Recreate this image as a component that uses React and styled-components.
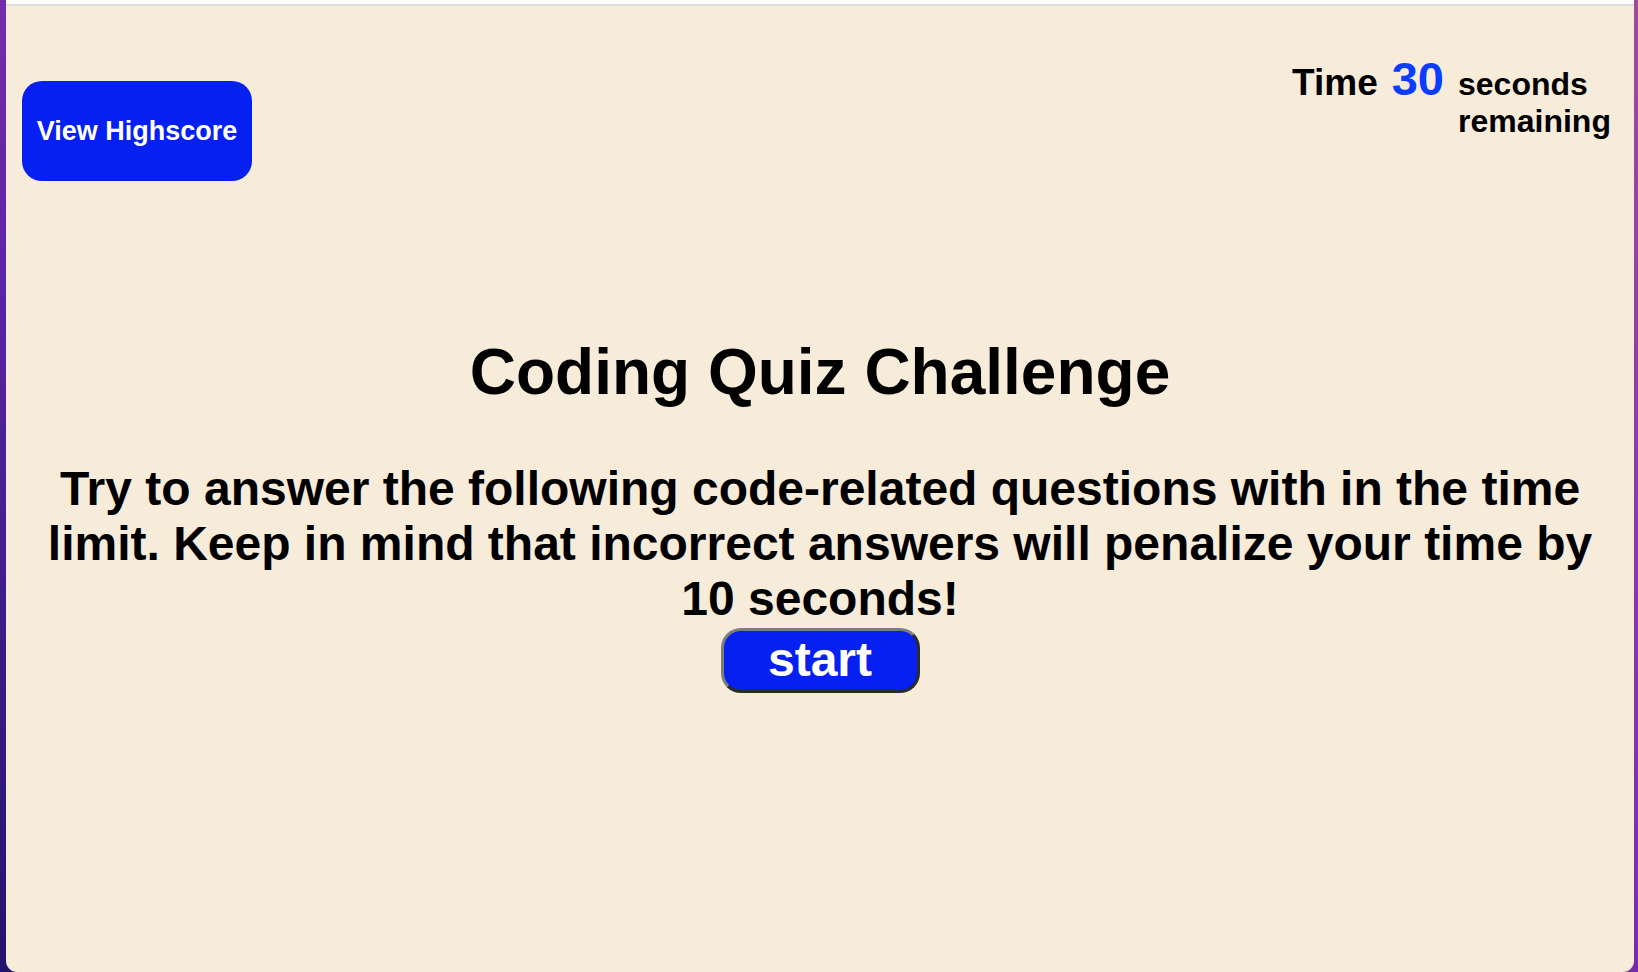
import React from "react";
import styled, { createGlobalStyle } from "styled-components";

const GlobalStyle = createGlobalStyle`
  html, body {
    margin: 0;
    padding: 0;
    height: 100%;
  }
  body {
    font-family: "Liberation Sans", Arial, Helvetica, sans-serif;
    background: linear-gradient(to top right, #22136c 0%, #5a24a4 35%, #7d2fae 55%, #a3479e 100%);
  }
  #root {
    height: 100%;
  }
`;

const Desktop = styled.div`
  height: 100vh;
  box-sizing: border-box;
  padding: 0 4px 0 6px;
  display: flex;
`;

const Window = styled.div`
  flex: 1;
  display: flex;
  flex-direction: column;
  background: #f7ebda;
  border-bottom-left-radius: 11px;
  border-bottom-right-radius: 11px;
  overflow: hidden;
`;

const Chrome = styled.div`
  height: 4px;
  background: #ffffff;
  border-bottom: 2px solid #dcdcdc;
  flex: none;
`;

const Header = styled.header`
  display: flex;
  justify-content: space-between;
  align-items: flex-start;
  padding: 49px 0 0 16px;
`;

const HighscoreButton = styled.button`
  margin-top: 26px;
  width: 230px;
  height: 100px;
  border: none;
  border-radius: 20px;
  background: #0520f0;
  color: #ffffff;
  font-family: inherit;
  font-weight: 700;
  font-size: 27px;
  padding: 0;
  cursor: pointer;
`;

const Timer = styled.div`
  display: flex;
  align-items: baseline;
  gap: 14px;
  font-weight: 700;
  color: #000;
`;

const TimerLabel = styled.span`
  font-size: 37px;
  line-height: 37px;
`;

const TimerCount = styled.span`
  font-size: 47px;
  line-height: 47px;
  color: #0b3dff;
`;

const TimerUnit = styled.span`
  font-size: 32px;
  line-height: 37px;
  width: 176px;
`;

const Main = styled.main`
  display: flex;
  flex-direction: column;
  align-items: center;
  text-align: center;
  padding: 154px 36px 0;
`;

const Title = styled.h1`
  margin: 0;
  font-size: 64px;
  font-weight: 700;
  line-height: normal;
`;

const Intro = styled.p`
  margin: 52px 0 2px;
  font-size: 48px;
  font-weight: 700;
  line-height: normal;
`;

const StartButton = styled.button`
  width: 199px;
  height: 65px;
  box-sizing: border-box;
  padding: 1px 0 3px;
  border: 3px solid;
  border-color: #7d7d7d #2b2b2b #2b2b2b #7d7d7d;
  border-radius: 20px;
  background: #0520f0;
  color: #ffffff;
  font-family: inherit;
  font-weight: 700;
  font-size: 48px;
  line-height: 55px;
  cursor: pointer;
`;

export default function App() {
  return (
    <>
      <GlobalStyle />
      <Desktop>
        <Window>
          <Chrome />
          <Header>
            <HighscoreButton>View Highscore</HighscoreButton>
            <Timer>
              <TimerLabel>Time</TimerLabel>
              <TimerCount>30</TimerCount>
              <TimerUnit>seconds remaining</TimerUnit>
            </Timer>
          </Header>
          <Main>
            <Title>Coding Quiz Challenge</Title>
            <Intro>
              Try to answer the following code-related questions with in the time limit. Keep in mind that incorrect
              answers will penalize your time by 10 seconds!
            </Intro>
            <StartButton>start</StartButton>
          </Main>
        </Window>
      </Desktop>
    </>
  );
}
